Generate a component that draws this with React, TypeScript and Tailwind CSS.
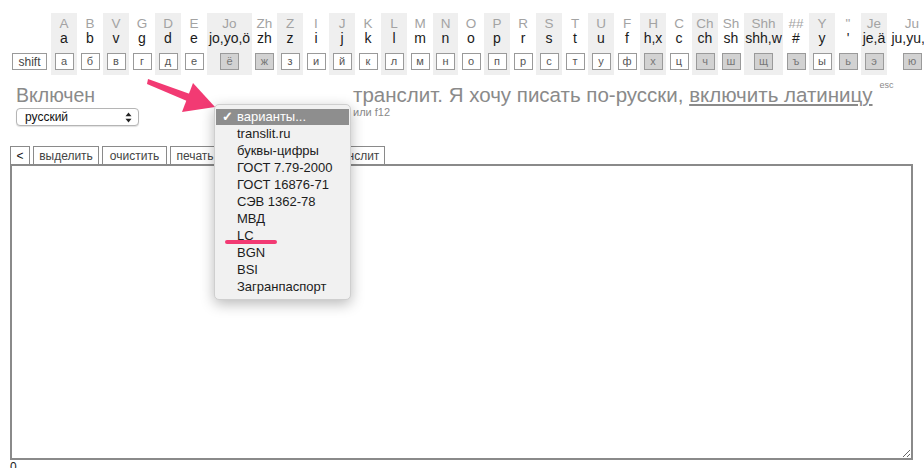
import React from "react";

type Col = { up: string; low: string; key: string; hl?: boolean; w?: string };

const cols: Col[] = [
  { up: "A", low: "a", key: "а" },
  { up: "B", low: "b", key: "б" },
  { up: "V", low: "v", key: "в" },
  { up: "G", low: "g", key: "г" },
  { up: "D", low: "d", key: "д" },
  { up: "E", low: "e", key: "е" },
  { up: "Jo", low: "jo,yo,ö", key: "ё", hl: true, w: "w-[45px]" },
  { up: "Zh", low: "zh", key: "ж", hl: true, w: "w-[25px]" },
  { up: "Z", low: "z", key: "з" },
  { up: "I", low: "i", key: "и" },
  { up: "J", low: "j", key: "й" },
  { up: "K", low: "k", key: "к" },
  { up: "L", low: "l", key: "л" },
  { up: "M", low: "m", key: "м" },
  { up: "N", low: "n", key: "н", w: "w-[25px]" },
  { up: "O", low: "o", key: "о" },
  { up: "P", low: "p", key: "п" },
  { up: "R", low: "r", key: "р" },
  { up: "S", low: "s", key: "с" },
  { up: "T", low: "t", key: "т" },
  { up: "U", low: "u", key: "у" },
  { up: "F", low: "f", key: "ф" },
  { up: "H", low: "h,x", key: "х", hl: true },
  { up: "C", low: "c", key: "ц" },
  { up: "Ch", low: "ch", key: "ч", hl: true },
  { up: "Sh", low: "sh", key: "ш", hl: true },
  { up: "Shh", low: "shh,w", key: "щ", hl: true, w: "w-[39px]" },
  { up: "##", low: "#", key: "ъ", hl: true },
  { up: "Y", low: "y", key: "ы" },
  { up: '"', low: "'", key: "ь", hl: true },
  { up: "Je", low: "je,ä", key: "э", hl: true },
  { up: "Ju", low: "ju,yu,ü", key: "ю", hl: true, w: "w-[50px]" },
];

const variants = [
  "translit.ru",
  "буквы-цифры",
  "ГОСТ 7.79-2000",
  "ГОСТ 16876-71",
  "СЭВ 1362-78",
  "МВД",
  "LC",
  "BGN",
  "BSI",
  "Загранпаспорт",
];

// toolbar buttons sit on top of the textarea like tabs
const tools = [
  { label: "<", w: "w-[20px] text-[#111]" },
  { label: "выделить", w: "w-[66px] text-[#444]" },
  { label: "очистить", w: "w-[65px] text-[#444]" },
  { label: "печать", w: "w-[50px] text-[#444]" },
  { label: "поделиться", w: "w-[97px] text-[#444]" },
  { label: "транслит", w: "w-[62px] text-[#444]" },
];

function Keyboard() {
  return (
    <div className="flex pt-[13px] whitespace-nowrap">
      <div className="w-[51px] shrink-0 flex flex-col items-end pr-1">
        <div className="h-[40px]" />
        <button className="h-[17px] w-[35px] border border-[#9a9a9a] bg-white text-[12px] leading-none text-[#444]">
          shift
        </button>
      </div>
      {cols.map((c, i) => (
        <div
          key={c.up}
          className={`${c.w ?? "w-[26px]"} shrink-0 flex flex-col items-center pt-[4px] pb-[5px] ${
            i % 2 === 0 ? "bg-[#efefef]" : "bg-white"
          }`}
        >
          <div className="h-[14px] text-[13.5px] leading-[14px] text-[#a3a3a3]">{c.up}</div>
          <div className="h-[14px] text-[14px] leading-[15px] text-[#1a1a1a]">{c.low}</div>
          <div
            className={`mt-[8px] h-[17px] w-[19px] border border-[#9a9a9a] flex items-center justify-center text-[11px] leading-none ${
              c.hl ? "bg-[#d2d2d2] text-[#777]" : "bg-white text-[#555]"
            }`}
          >
            {c.key}
          </div>
        </div>
      ))}
    </div>
  );
}

function LangSelect() {
  return (
    <div className="mt-[2px] h-[18px] w-[123px] rounded-[4px] border border-[#b5b5b5] bg-white shadow-[0_1px_1px_rgba(0,0,0,0.12)] flex items-center justify-between pl-[8px] pr-[6px]">
      <span className="text-[12px] text-[#111]">русский</span>
      <svg width="7" height="11" viewBox="0 0 7 11">
        <path d="M3.5 0.5 L6.5 4.2 L0.5 4.2 Z" fill="#222" />
        <path d="M3.5 10.5 L6.5 6.8 L0.5 6.8 Z" fill="#222" />
      </svg>
    </div>
  );
}

function VariantsMenu() {
  return (
    <div className="absolute z-20 left-[214px] top-[104px] w-[137px] rounded-[5px] border border-[#cfcfcf] bg-[#f1f1f1] py-[4px] shadow-[0_4px_14px_rgba(0,0,0,0.28)] text-[13px] text-[#1c1c1c]">
      <div className="mx-[1px] h-[16px] bg-[#8e8e8e] text-white flex items-center">
        <span className="w-[21px] pl-[6px] text-[13px] font-bold">✓</span>
        <span>варианты...</span>
      </div>
      {variants.map((v) => (
        <div key={v} className="relative h-[17px] pl-[22px] leading-[17px]">
          {v}
          {v === "LC" && (
            <span className="absolute left-[10px] top-[13px] h-[4px] w-[52px] rounded-full bg-[#f23a73]" />
          )}
        </div>
      ))}
    </div>
  );
}

function PointerArrow() {
  return (
    <svg className="absolute z-20 left-0 top-0 pointer-events-none" width="230" height="120">
      <path d="M148 79 L190 94 L187 101 L147 84 Z" fill="#f23a73" />
      <path d="M215 107 L182 112 L193 83 Z" fill="#f23a73" />
    </svg>
  );
}

export default function App() {
  return (
    <div className="relative w-[924px] h-[468px] overflow-hidden bg-white font-['Liberation_Sans',Arial,sans-serif]">
      <Keyboard />

      <div className="flex items-start pl-4 pt-[9px]">
        <div className="w-[337px] shrink-0">
          <div className="text-[19.5px] leading-[22px] text-[#8a8a8a]">Включен</div>
          <LangSelect />
        </div>
        <div className="text-[#8a8a8a]">
          <div className="text-[20.5px] leading-[22px] whitespace-nowrap">
            транслит. Я хочу писать по-русски, <span className="underline">включить латиницу</span>
            <sup className="ml-[7px] text-[9px] align-[10px]">esc</sup>
          </div>
          <div className="text-[11px] leading-[12px]">или f12</div>
        </div>
      </div>

      <div className="flex gap-[3px] pl-[10px] mt-[20px]">
        {tools.map((t) => (
          <button
            key={t.label}
            className={`${t.w} h-[19px] border border-[#8a8a8a] bg-white text-[12px] leading-none`}
          >
            {t.label}
          </button>
        ))}
      </div>
      <textarea
        readOnly
        className="block ml-[10px] -mt-px w-[903px] h-[296px] border-2 border-[#8a8a8a] bg-white outline-none"
      />
      <div className="pl-[10px] text-[12px] leading-[14px] text-[#222]">0</div>

      <PointerArrow />
      <VariantsMenu />
    </div>
  );
}
